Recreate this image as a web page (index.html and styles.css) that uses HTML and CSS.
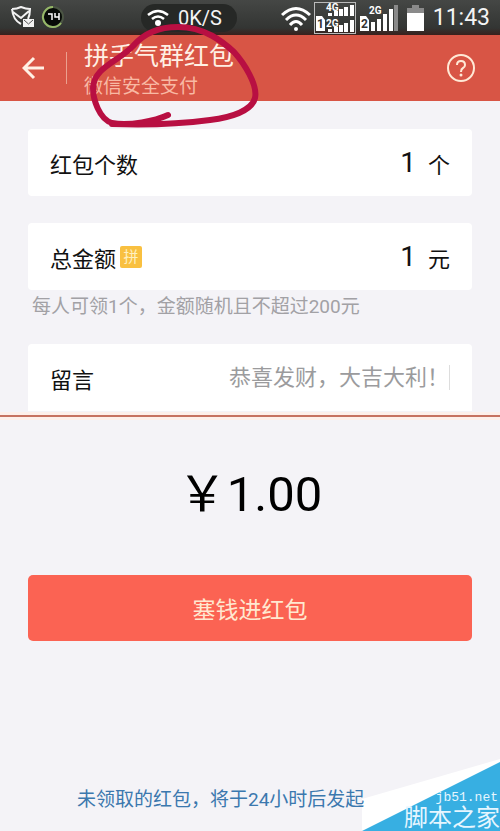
FILE: index.html
```html
<!DOCTYPE html>
<html lang="zh-CN">
<head>
<meta charset="utf-8">
<meta name="viewport" content="width=device-width, initial-scale=1">
<title>拼手气群红包</title>
<link rel="stylesheet" href="styles.css">
</head>
<body>
<div class="status">
  <svg class="status-app" width="54" height="24" viewBox="0 0 54 24" aria-hidden="true">
    <path d="M1 3Q6 3 10 1Q15 3 19 3Q19 9 17 13M1 3Q2 14 10 18M2 6L10 12L18 5" fill="none" stroke="#f2f2f2" stroke-width="2"/>
    <rect x="12" y="13" width="11" height="8" fill="#f2f2f2"/>
    <path d="M13 14l4.500 4 4.500-4" fill="none" stroke="#555" stroke-width="1"/>
    <circle cx="42" cy="11" r="10" fill="#070b07" stroke="#4b5544" stroke-width="2"/>
    <path d="M42 1A10 10 0 1 0 50 17" fill="none" stroke="#96b868" stroke-width="2"/>
    <path d="M37 8H41V14M44 7V11H48M48 7V14" fill="none" stroke="#fff" stroke-width="1.500"/>
  </svg>
  <div class="speed">
    <svg width="24" height="18" viewBox="0 0 24 18" aria-hidden="true">
      <path d="M2 6Q12-2 22 6M6 10Q12 5 18 10" fill="none" stroke="#fff" stroke-width="2.500"/>
      <circle cx="12" cy="14" r="3" fill="#fff"/>
    </svg>
    <span>0K/S</span>
  </div>
  <svg class="status-signal" width="144" height="34" viewBox="0 0 144 34" aria-hidden="true">
    <g fill="none" stroke="#fff" stroke-width="3">
      <path d="M1 14Q15 1 29 14M5 19Q15 9 25 19M9 24Q15 17 21 24"/>
    </g>
    <circle cx="15" cy="28" r="2" fill="#fff"/>
    <rect x="33.500" y="1.500" width="41" height="31" fill="none" stroke="#bbb"/>
    <g fill="#fff">
      <path d="M35 15h6l3 4v11h-9zM79 15h6l3 4v11h-9z"/>
      <path d="M47 12h4v3h-4zM53 10h4v5h-4zM58 8h4v7h-4zM63 6h4v9h-4zM69 4h4v11h-4z"/>
      <path d="M47 28h4v3h-4zM53 26h4v5h-4zM58 24h4v7h-4zM63 22h4v9h-4zM69 19h4v12h-4z"/>
      <path d="M90 21h4v9h-4zM96 18h4v12h-4zM102 13h4v17h-4zM108 8h4v22h-4z"/>
      <path d="M126 12h17v18h-17z"/>
    </g>
    <path d="M113 4h4v26h-4zM131 4h7v3h5v5h-17V7h5z" fill="#8a8a8a"/>
    <g class="sim">
      <text x="36" y="27" class="sim-no">1</text>
      <text x="80" y="27" class="sim-no">2</text>
      <text x="45" y="10">4G</text>
      <text x="45" y="26">2G</text>
      <text x="88" y="13">2G</text>
    </g>
  </svg>
  <time class="clock">11:43</time>
</div>

<header class="bar">
  <button class="icon-btn back" aria-label="返回">
    <svg width="24" height="24" viewBox="0 0 24 24"><path d="M22 12H3M12 2L2 12L12 22" fill="none" stroke="#fff0e4" stroke-width="3"/></svg>
  </button>
  <div class="titles">
    <h1>拼手气群红包</h1>
    <p>微信安全支付</p>
  </div>
  <button class="icon-btn" aria-label="帮助">
    <svg width="30" height="30" viewBox="0 0 30 30">
      <circle cx="15" cy="15" r="13" fill="none" stroke="#ffe9d6" stroke-width="2"/>
      <path d="M11 12Q11 8 15 8Q19 8 19 12Q19 14 17 15Q15 16 15 19" fill="none" stroke="#ffe9d6" stroke-width="2"/>
      <circle cx="15" cy="22" r="1.500" fill="#ffe9d6"/>
    </svg>
  </button>
</header>

<main>
  <form class="form">
    <div class="row">
      <label for="count">红包个数</label>
      <input id="count" class="num" type="text" inputmode="numeric" value="1">
      <span class="unit">个</span>
    </div>
    <div class="row">
      <label for="total">总金额</label>
      <span class="tag">拼</span>
      <input id="total" class="num" type="text" inputmode="decimal" value="1">
      <span class="unit">元</span>
    </div>
    <p class="hint">每人可领1个，金额随机且不超过200元</p>
    <div class="row message">
      <label for="note">留言</label>
      <input id="note" class="note" type="text" placeholder="恭喜发财，大吉大利！">
    </div>
  </form>
  <hr class="rule">
  <p class="amount">￥1.00</p>
  <button class="submit">塞钱进红包</button>
</main>

<footer class="foot">未领取的红包，将于24小时后发起</footer>

<svg class="scribble" width="180" height="110" viewBox="85 20 180 110" aria-hidden="true">
  <path d="M168 115C155 121 130 126 112 123C99 119 93 99 93 88C94 67 118 62 133 46C145 32 160 27 178 27C205 27 223 42 234 52C244 63 258 85 255 98C252 110 233 117 210 120C180 124 140 125 112 124" fill="none" stroke="#b80f42" stroke-width="6" stroke-linecap="round" stroke-linejoin="round"/>
</svg>

<div class="mark">
  <svg width="138" height="72" viewBox="0 0 138 72" aria-hidden="true">
    <path d="M0 40L138 0V72H0z" fill="#fff"/>
    <path d="M0 72L138 3V72z" fill="#37afe2"/>
  </svg>
  <div class="mark-text"><span class="mark-url">jb51.net</span><span class="mark-name">脚本之家</span></div>
</div>
</body>
</html>
```
FILE: styles.css
```css
* { box-sizing: border-box; }

body {
  margin: 0;
  min-height: 100vh;
  position: relative;
  display: flex;
  flex-direction: column;
  overflow-x: hidden;
  background: #f4f3f7;
  color: #111;
  font-family: Roboto, "Noto Sans CJK SC", sans-serif;
  font-size: 22px;
}

h1, p { margin: 0; font-weight: 400; }

button, input {
  border: 0;
  padding: 0;
  background: none;
  color: inherit;
  font: inherit;
}

.status {
  display: flex;
  align-items: center;
  height: 35px;
  padding: 0 10px 0 11px;
  background: linear-gradient(#454745, #333533 80%, #3a201c);
  color: #f4f4f4;
}

.speed {
  display: flex;
  align-items: center;
  gap: 8px;
  height: 28px;
  margin-left: 76px;
  padding: 0 15px 0 5px;
  border-radius: 14px;
  background: #262826;
  font-size: 20px;
}

.status-signal { margin-left: auto; }
.sim { fill: #fff; font-size: 10px; font-weight: 700; }
.sim .sim-no { fill: #333; font-size: 12px; }
.clock { margin-left: 8px; font-size: 23px; }

.bar {
  display: flex;
  align-items: center;
  height: 66px;
  padding: 0 24px 0 22px;
  background: #d85545;
  color: #fff0e4;
}

.icon-btn { display: flex; }

.titles {
  flex: 1;
  margin-left: 38px;
  padding-top: 5px;
}

.back { position: relative; }
.back::after {
  content: "";
  position: absolute;
  left: 44px;
  top: -4px;
  width: 1px;
  height: 32px;
  background: #eba08f;
}

h1 { font-size: 25px; line-height: 32px; }
.titles p { font-size: 19px; line-height: 28px; color: #f8b9a4; }

.form {
  display: flex;
  flex-direction: column;
  padding: 28px 28px 0;
}

.row {
  display: flex;
  align-items: center;
  height: 67px;
  padding: 0 22px;
  border-radius: 4px;
  background: #fff;
}

.row + .row { margin-top: 27px; }

.tag {
  width: 22px;
  margin-left: 4px;
  border-radius: 2px;
  background: #f9c040;
  color: #fff0c0;
  font-size: 15px;
  line-height: 22px;
  text-align: center;
}

.num {
  flex: 1;
  min-width: 0;
  text-align: right;
  font-size: 28px;
}

.unit { margin-left: 12px; }

.hint {
  padding: 2px 0 0 4px;
  color: #a2a1a5;
  font-size: 19px;
  line-height: 30px;
}

.message { margin-top: 22px; border-radius: 4px 4px 0 0; }

.note {
  flex: 1;
  min-width: 0;
  margin-left: 24px;
  border-right: 1px solid #ddd;
  text-align: right;
}
.note::placeholder { color: #9b9b9d; opacity: 1; }

.rule {
  height: 2px;
  margin: 4px 0 0;
  border: 0;
  background: #c67260;
  box-shadow: 0 0 0 3px #fdf0ea;
}

.amount {
  margin-top: 48px;
  color: #000;
  font-size: 49px;
  line-height: 60px;
  text-align: center;
}

.submit {
  display: block;
  width: calc(100% - 56px);
  height: 66px;
  margin: 50px 28px 0;
  border-radius: 5px;
  background: #fb6353;
  color: #ffe8d0;
  font-size: 23px;
}

.foot {
  margin-top: auto;
  padding: 0 0 16px 77px;
  color: #3b78ae;
  font-size: 19px;
  line-height: 30px;
}

.scribble {
  position: absolute;
  left: 85px;
  top: 20px;
  pointer-events: none;
}

.mark {
  position: absolute;
  right: 0;
  bottom: 0;
  display: flex;
  z-index: -1;
}

.mark-text {
  position: absolute;
  right: 0;
  bottom: 0;
  display: flex;
  flex-direction: column;
  align-items: flex-end;
  color: #e6f6ff;
}

.mark-url {
  padding-right: 2px;
  font-family: "Liberation Mono", monospace;
  font-size: 13px;
  line-height: 14px;
}

.mark-name { font-size: 24px; line-height: 26px; }
```
